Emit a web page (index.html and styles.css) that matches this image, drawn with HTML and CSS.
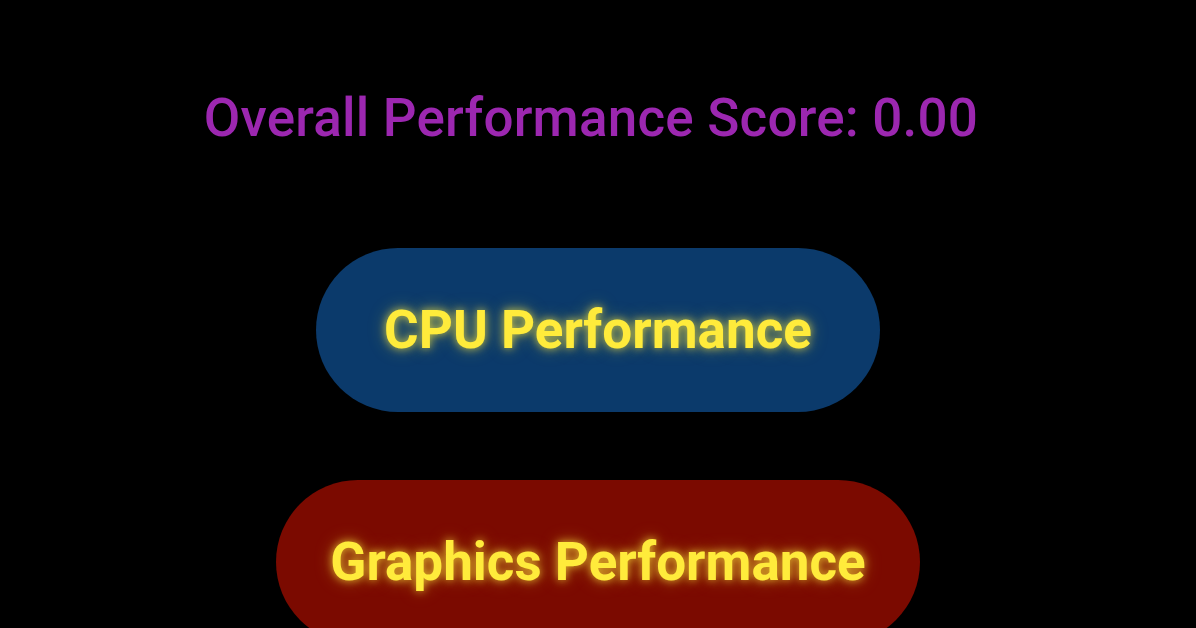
FILE: index.html
```html
<!DOCTYPE html>
<html>
<head>
<meta charset="utf-8">
<link rel="stylesheet" href="styles.css">
</head>
<body>
<main class="screen">
  <h1 class="score">Overall Performance Score: 0.00</h1>
  <button class="pill pill-cpu">CPU Performance</button>
  <button class="pill pill-gpu">Graphics Performance</button>
</main>
</body>
</html>
```
FILE: styles.css
```css
html, body {
  margin: 0;
  padding: 0;
  background: #000;
  height: 100%;
  overflow: hidden;
}
.screen {
  display: flex;
  flex-direction: column;
  align-items: center;
  padding-top: 86px;
  font-family: Roboto, "Noto Sans", sans-serif;
}
.score {
  margin: 0 14px 0 0;
  font-size: 53px;
  line-height: 64px;
  font-weight: 500;
  color: #9c27b0;
  letter-spacing: 0.2px;
}
.pill {
  display: flex;
  align-items: center;
  justify-content: center;
  border: none;
  border-radius: 999px;
  font-family: Roboto, "Noto Sans", sans-serif;
  font-size: 53px;
  font-weight: 700;
  color: #ffeb3b;
  text-shadow: 0 0 8px rgba(255, 235, 59, 0.75), 0 0 18px rgba(255, 235, 59, 0.35);
  padding: 0;
}
.pill-cpu {
  margin-top: 98px;
  width: 564px;
  height: 164px;
  background: #0b3a6b;
}
.pill-gpu {
  margin-top: 68px;
  width: 644px;
  height: 164px;
  background: #7b0a00;
}
```
